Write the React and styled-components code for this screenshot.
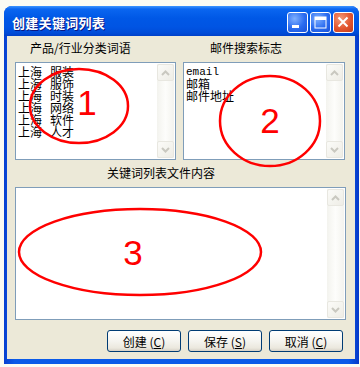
import React from 'react'
import styled, { createGlobalStyle } from 'styled-components'

const GlobalStyle = createGlobalStyle`
  html, body {
    margin: 0;
    padding: 0;
    background: #fbfbf3;
    width: 360px;
    height: 367px;
    overflow: hidden;
  }
`

const Up = () => (
  <svg width="9" height="6" viewBox="0 0 9 6">
    <path d="M1 5 L4.5 1.5 L8 5" fill="none" stroke="#c9c8c0" strokeWidth="2" />
  </svg>
)

const Down = () => (
  <svg width="9" height="6" viewBox="0 0 9 6">
    <path d="M1 1 L4.5 4.5 L8 1" fill="none" stroke="#c9c8c0" strokeWidth="2" />
  </svg>
)

const ScrollBar = () => (
  <Scroll>
    <Arrow><Up /></Arrow>
    <Arrow><Down /></Arrow>
  </Scroll>
)

const App = () => {
  const keywords = [
    ['上海', '服装'],
    ['上海', '服饰'],
    ['上海', '时装'],
    ['上海', '网络'],
    ['上海', '软件'],
    ['上海', '人才'],
  ]

  return (
    <Page>
      <GlobalStyle />
      <Window>
        <TitleBar>
          <Title>创建关键词列表</Title>
          <Controls>
            <CtrlButton>
              <svg width="21" height="21" viewBox="0 0 21 21">
                <rect x="5" y="13" width="7" height="3" fill="#fff" />
              </svg>
            </CtrlButton>
            <CtrlButton>
              <svg width="21" height="21" viewBox="0 0 21 21">
                <rect x="5" y="5" width="11" height="11" fill="none" stroke="#fff" strokeWidth="1" />
                <rect x="5" y="5" width="11" height="3" fill="#fff" />
              </svg>
            </CtrlButton>
            <CtrlButton $close>
              <svg width="21" height="21" viewBox="0 0 21 21">
                <path d="M5.5 5.5 L14.5 14.5 M14.5 5.5 L5.5 14.5" stroke="#fff" strokeWidth="2" />
              </svg>
            </CtrlButton>
          </Controls>
        </TitleBar>

        <Client>
          <TopRow>
            <Column $width={161}>
              <Label $indent={15}>产品/行业分类词语</Label>
              <ListBox $height={98}>
                <ListText>
                  {keywords.map(([city, word], i) => (
                    <Line key={i}>
                      <span>{city}</span>
                      <span>{word}</span>
                    </Line>
                  ))}
                </ListText>
                <ScrollBar />
              </ListBox>
            </Column>
            <Column $width={162}>
              <Label $indent={27}>邮件搜索标志</Label>
              <ListBox $height={98}>
                <ListText>
                  <Latin>email</Latin>
                  <Line>邮箱</Line>
                  <Line>邮件地址</Line>
                </ListText>
                <ScrollBar />
              </ListBox>
            </Column>
          </TopRow>

          <Label $indent={92} $top={7}>关键词列表文件内容</Label>
          <ListBox $height={133}>
            <ListText />
            <ScrollBar />
          </ListBox>

          <ButtonRow>
            <Button>创建 (<u>C</u>)</Button>
            <Button>保存 (<u>S</u>)</Button>
            <Button>取消 (<u>C</u>)</Button>
          </ButtonRow>
        </Client>
      </Window>

      <Marks width="360" height="367" viewBox="0 0 360 367">
        <ellipse cx="79" cy="106" rx="49" ry="37" fill="none" stroke="#ff0000" strokeWidth="2.5" />
        <text x="87" y="115" fontFamily="Liberation Sans, Arial, sans-serif" fontSize="35" fill="#ff0000" textAnchor="middle">1</text>
        <ellipse cx="270" cy="121" rx="50" ry="45" fill="none" stroke="#ff0000" strokeWidth="2.5" />
        <text x="270" y="133" fontFamily="Liberation Sans, Arial, sans-serif" fontSize="35" fill="#ff0000" textAnchor="middle">2</text>
        <ellipse cx="140" cy="252" rx="121" ry="43" fill="none" stroke="#ff0000" strokeWidth="2.5" />
        <text x="133" y="265" fontFamily="Liberation Sans, Arial, sans-serif" fontSize="35" fill="#ff0000" textAnchor="middle">3</text>
      </Marks>
    </Page>
  )
}

export default App

const Page = styled.div`
  position: relative;
  width: 360px;
  height: 367px;
  padding: 6px 0 0 4px;
  box-sizing: border-box;
  font-family: "Noto Sans CJK SC", "DejaVu Sans", sans-serif;
`

const Window = styled.div`
  width: 355px;
  height: 358px;
  box-sizing: border-box;
  display: flex;
  flex-direction: column;
  border-radius: 8px 8px 0 0;
  background: linear-gradient(90deg, #0840d0 0%, #0a5ae8 3%, #0a5ae8 97%, #0638c8 100%);
  overflow: hidden;
`

const TitleBar = styled.div`
  height: 30px;
  flex: none;
  display: flex;
  align-items: center;
  justify-content: space-between;
  padding: 2px 5px 0 8px;
  box-sizing: border-box;
  background: linear-gradient(180deg, #3d95ff 0%, #0a66f0 10%, #0058e6 40%, #0054e3 70%, #004cd8 90%, #0040c8 100%);
`

const Title = styled.span`
  color: #fff;
  font-size: 13px;
  font-weight: bold;
  letter-spacing: 0.3px;
  text-shadow: 1px 1px 0 #0a1883;
`

const Controls = styled.div`
  display: flex;
  gap: 2px;
`

const CtrlButton = styled.div`
  width: 21px;
  height: 21px;
  box-sizing: border-box;
  border: 1px solid #fff;
  border-radius: 3px;
  display: flex;
  align-items: center;
  justify-content: center;
  background: ${p => p.$close
    ? 'radial-gradient(circle at 35% 30%, #f29a7a 0%, #e2552f 55%, #c43c1c 100%)'
    : 'radial-gradient(circle at 35% 30%, #7fb0ff 0%, #2a6cf0 55%, #1a52d8 100%)'};
  svg {
    margin: -1px;
  }
`

const Client = styled.div`
  flex: 1;
  margin: 0 4px 5px 3px;
  background: #ece9d8;
  display: flex;
  flex-direction: column;
  padding: 6px 9px 0 8px;
`

const TopRow = styled.div`
  display: flex;
  gap: 7px;
`

const Column = styled.div`
  width: ${p => p.$width}px;
  display: flex;
  flex-direction: column;
`

const Label = styled.div`
  font-size: 12px;
  line-height: 12px;
  height: 12px;
  margin: ${p => p.$top || 0}px 0 8px;
  padding-left: ${p => p.$indent}px;
  color: #000;
  white-space: nowrap;
`

const ListBox = styled.div`
  height: ${p => p.$height}px;
  box-sizing: border-box;
  border: 1px solid #7f9db9;
  background: #fff;
  display: flex;
  padding: 1px;
`

const ListText = styled.div`
  flex: 1;
  padding: 2px 0 0 1px;
  font-size: 12px;
  line-height: 12px;
  color: #000;
`

const Line = styled.div`
  display: flex;
  gap: 8px;
  height: 12px;
  white-space: nowrap;
`

const Latin = styled.div`
  font-family: "Liberation Mono", monospace;
  font-size: 11px;
  line-height: 12px;
  height: 12px;
`

const Scroll = styled.div`
  width: 17px;
  flex: none;
  display: flex;
  flex-direction: column;
  justify-content: space-between;
  background: linear-gradient(90deg, #f3f3ee 0%, #fdfdfb 50%, #f3f3ee 100%);
`

const Arrow = styled.div`
  height: 17px;
  box-sizing: border-box;
  border: 1px solid #e8e7e0;
  border-radius: 2px;
  background: linear-gradient(135deg, #fbfbf8 0%, #eeede6 100%);
  display: flex;
  align-items: center;
  justify-content: center;
`

const ButtonRow = styled.div`
  display: flex;
  justify-content: flex-end;
  gap: 7px;
  margin: 10px 3px 0 0;
`

const Button = styled.div`
  width: 74px;
  height: 22px;
  box-sizing: border-box;
  border: 1px solid #003c74;
  border-radius: 3px;
  background: linear-gradient(180deg, #ffffff 0%, #f5f4ef 50%, #ebe8de 85%, #d6d0c5 100%);
  display: flex;
  align-items: center;
  justify-content: center;
  font-size: 12px;
  color: #000;
  white-space: nowrap;
  u {
    text-underline-offset: 1px;
  }
`

const Marks = styled.svg`
  position: absolute;
  left: 0;
  top: 0;
  pointer-events: none;
`
